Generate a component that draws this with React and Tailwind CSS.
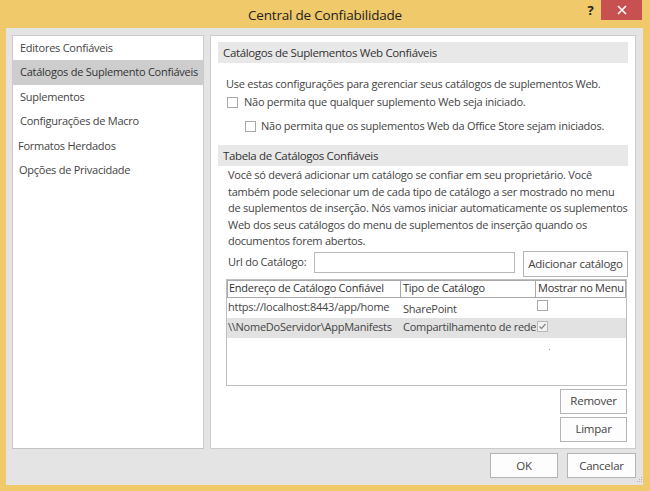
import React from "react";

function Box({ checked }) {
  return (
    <div
      className={
        "w-[11px] h-[11px] border flex items-center justify-center shrink-0 " +
        (checked ? "border-[#b8b8b8] bg-[#f2f2f2]" : "border-[#a9a9a9] bg-white")
      }
    >
      {checked && (
        <svg width="9" height="9" viewBox="0 0 9 9">
          <path d="M1.5 4.5 L3.5 6.5 L7.5 2" stroke="#8a8a8a" strokeWidth="1.3" fill="none" />
        </svg>
      )}
    </div>
  );
}

function Btn({ children, className = "" }) {
  return (
    <div
      className={
        "flex items-center justify-center bg-[#fdfdfd] border border-[#b4b4b4] text-[11.5px] text-[#444] whitespace-nowrap shrink-0 " +
        className
      }
    >
      {children}
    </div>
  );
}

export default function App() {
  const items = [
    ["Editores Confiáveis", false, "pl-[7px]"],
    ["Catálogos de Suplemento Confiáveis", true, "pl-[7px]"],
    ["Suplementos", false, "pl-[7px]"],
    ["Configurações de Macro", false, "pl-[7px]"],
    ["Formatos Herdados", false, "pl-[5px]"],
    ["Opções de Privacidade", false, "pl-[6px]"],
  ];
  return (
    <div className="w-[650px] h-[491px] bg-[#f0c96a] flex flex-col font-['Open_Sans',sans-serif] text-[#444] whitespace-nowrap tracking-[-0.25px]">
      {/* title bar */}
      <div className="h-[28px] flex items-start shrink-0">
        <div className="w-[70px]" />
        <div className="flex-1 h-[28px] flex items-center justify-center text-[13.5px] tracking-[-0.2px] text-[#222] pt-[3px]">
          Central de Confiabilidade
        </div>
        <div className="w-[70px] flex items-start pr-[8px]">
          <div className="w-[21px] h-[20px] flex items-center justify-center text-[13px] font-bold text-[#222] pt-[2px]">
            ?
          </div>
          <div className="w-[41px] h-[20px] bg-[#c75050] flex items-center justify-center">
            <svg width="10" height="10" viewBox="0 0 10 10">
              <path d="M1 1 L9 9 M9 1 L1 9" stroke="#fff" strokeWidth="1.6" />
            </svg>
          </div>
        </div>
      </div>

      {/* client area */}
      <div className="flex-1 ml-[6px] mr-[7px] mb-[6px] bg-[#e4e4e4] flex flex-col pl-[6px] pt-[7px]">
        <div className="flex gap-[6px] h-[414px] pr-[7px]">
          {/* left nav */}
          <div className="w-[192px] shrink-0 bg-white border border-[#cbcbcb] border-b-[#c2c2c2] text-[11px] overflow-hidden">
            {items.map(([t, sel, pl]) => (
              <div
                key={t}
                className={
                  "h-[24.4px] flex items-center " +
                  pl +
                  (sel ? " bg-[#cdcdcd] text-[#333]" : "")
                }
              >
                {t}
              </div>
            ))}
          </div>

          {/* right pane */}
          <div className="w-[426px] shrink-0 bg-white border border-[#cbcbcb] flex flex-col px-[7px] pt-[6px] text-[11px] overflow-hidden">
            <div className="h-[21px] bg-[#e8e8e8] flex items-center pl-[5px] text-[11.5px] tracking-[-0.35px] text-[#333]">
              Catálogos de Suplementos Web Confiáveis
            </div>
            <div className="mt-[13px] pl-[8px] h-[16px] leading-[16px]">
              Use estas configurações para gerenciar seus catálogos de suplementos Web.
            </div>
            <div className="mt-[2px] pl-[9px] h-[16px] flex items-center gap-[6px]">
              <Box />
              <span className="leading-[16px]">Não permita que qualquer suplemento Web seja iniciado.</span>
            </div>
            <div className="mt-[8px] pl-[27px] h-[16px] flex items-center gap-[5px]">
              <Box />
              <span className="leading-[16px]">
                Não permita que os suplementos Web da Office Store sejam iniciados.
              </span>
            </div>
            <div className="mt-[11px] h-[21px] bg-[#e8e8e8] flex items-center pl-[5px] text-[11.5px] tracking-[-0.35px] text-[#333]">
              Tabela de Catálogos Confiáveis
            </div>
            <div className="pl-[10px] leading-[16.5px] mt-[1px]">
              Você só deverá adicionar um catálogo se confiar em seu proprietário. Você
              <br />
              também pode selecionar um de cada tipo de catálogo a ser mostrado no menu
              <br />
              de suplementos de inserção. Nós vamos iniciar automaticamente os suplementos
              <br />
              Web dos seus catálogos do menu de suplementos de inserção quando os
              <br />
              documentos forem abertos.
            </div>
            <div className="flex items-start mt-[1px] pl-[10px]">
              <div className="w-[86px] shrink-0 h-[21px] mt-[1px] flex items-center">Url do Catálogo:</div>
              <div className="w-[201px] shrink-0 h-[21px] mt-[1px] border border-[#b9b9b9] bg-white" />
              <Btn className="ml-[8px] w-[105px] h-[26px]">Adicionar catálogo</Btn>
            </div>
            <div className="mt-[2px] ml-[8px] mr-[1px] h-[107px] border border-[#bfbfbf] bg-white flex flex-col">
              <div className="flex h-[18px]">
                <div className="w-[174px] shrink-0 overflow-hidden border border-[#a9a9a9] flex items-center pl-[1px] text-[#333]">
                  Endereço de Catálogo Confiável
                </div>
                <div className="w-[135px] shrink-0 overflow-hidden border border-[#a9a9a9] border-l-0 flex items-center pl-[2px] text-[#333]">
                  Tipo de Catálogo
                </div>
                <div className="flex-1 min-w-0 overflow-hidden border border-[#a9a9a9] border-l-0 flex items-center pl-[2px] text-[#333]">
                  Mostrar no Menu
                </div>
              </div>
              <div className="flex h-[20px] items-center">
                <div className="w-[174px] shrink-0 overflow-hidden pl-[1px]">https://localhost:8443/app/home</div>
                <div className="w-[135px] shrink-0 overflow-hidden pl-[2px] pt-[3px]">SharePoint</div>
                <div className="flex-1 self-start pt-[2px] pl-[1px]">
                  <Box />
                </div>
              </div>
              <div className="flex h-[20px] items-center bg-[#e2e2e2]">
                <div className="w-[174px] shrink-0 overflow-hidden pl-[1px]">\\NomeDoServidor\AppManifests</div>
                <div className="w-[135px] shrink-0 overflow-hidden pl-[2px]">Compartilhamento de rede</div>
                <div className="flex-1 self-start pt-[3px] pl-[1px]">
                  <Box checked />
                </div>
              </div>
              <div className="flex-1 flex">
                <div className="w-[322px]" />
                <div className="mt-[11px] w-[1px] h-[1px] bg-[#9a9a9a]" />
              </div>
            </div>
            <div className="flex flex-col items-end mt-[3px] mr-[1px] gap-[3px]">
              <Btn className="w-[67px] h-[25px]">Remover</Btn>
              <Btn className="w-[67px] h-[25px]">Limpar</Btn>
            </div>
          </div>
        </div>

        {/* bottom buttons */}
        <div className="flex justify-end items-start mt-[4px]">
          <Btn className="w-[68px] h-[25px] text-[#333]">OK</Btn>
          <Btn className="ml-[9px] w-[69px] h-[25px] text-[#333]">Cancelar</Btn>
          <div className="w-[7px] h-[32px] flex items-end justify-end">
            <svg width="6" height="6" viewBox="0 0 6 6" className="mb-[2px]">
              <rect x="4" y="0" width="1" height="1" fill="#b0b0b0" />
              <rect x="2" y="2" width="1" height="1" fill="#b0b0b0" />
              <rect x="4" y="2" width="1" height="1" fill="#b0b0b0" />
              <rect x="0" y="4" width="1" height="1" fill="#b0b0b0" />
              <rect x="2" y="4" width="1" height="1" fill="#b0b0b0" />
              <rect x="4" y="4" width="1" height="1" fill="#b0b0b0" />
            </svg>
          </div>
        </div>
      </div>
    </div>
  );
}
